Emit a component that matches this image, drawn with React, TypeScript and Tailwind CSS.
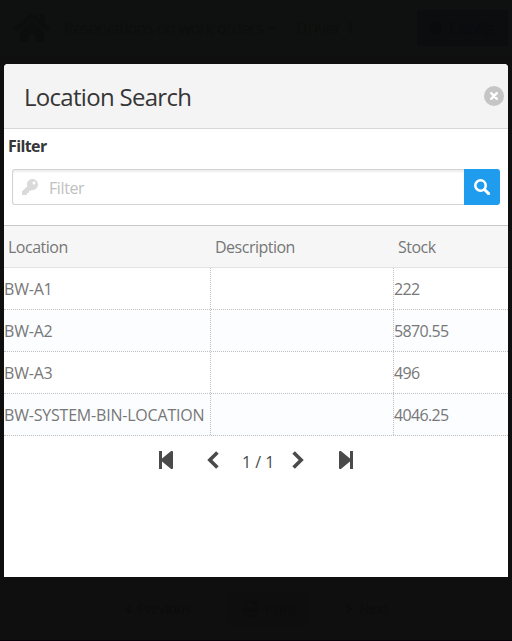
import { FaChevronDown, FaChevronLeft, FaChevronRight, FaCog, FaHome, FaKey, FaPrint } from "react-icons/fa";

const rows = [
  { location: "BW-A1", description: "", stock: "222" },
  { location: "BW-A2", description: "", stock: "5870.55" },
  { location: "BW-A3", description: "", stock: "496" },
  { location: "BW-SYSTEM-BIN-LOCATION", description: "", stock: "4046.25" },
];

function PageHeader() {
  return (
    <header className="flex h-[56px] shrink-0 items-center bg-[#0e110f] text-[16px] whitespace-nowrap text-[#0b0e0c]">
      <FaHome className="ml-[14px] h-[32px] w-[36px] shrink-0" />
      <span className="ml-[14px] w-[203px] shrink-0 tracking-[-0.55px]">Reservations on work orders</span>
      <FaChevronDown className="h-[9px] w-[10px] shrink-0" />
      <span className="ml-[19px] w-[121px] shrink-0 tracking-[-0.1px]">Driver 1</span>
      <div className="flex h-[36px] w-[91px] shrink-0 items-center gap-[7px] rounded-[3px] bg-[#0b0d0f] pl-[11px] tracking-[-0.4px] text-[#0a0b0d]">
        <FaCog className="size-[14px]" />
        <span>Config</span>
      </div>
    </header>
  );
}

function PageFooter() {
  return (
    <footer className="flex h-[64px] items-center border-b border-[#080008] bg-[#0f0f0f] text-[14px] text-[#0c0c0c]">
      <FaChevronLeft className="ml-[124px] size-[10px]" />
      <span className="ml-[4px] w-[89px] tracking-[-0.4px]">Previous</span>
      <div className="flex h-[34px] w-[81px] items-center gap-[6px] rounded bg-[#0e0e0e] pl-[16px] text-[#0c0c0c]">
        <FaPrint className="size-[16px]" />
        <span>Print</span>
      </div>
      <FaChevronRight className="ml-[36px] size-[10px]" />
      <span className="ml-[5px] tracking-[-0.4px]">Next</span>
    </footer>
  );
}

function EndIcon({ flip }: { flip?: boolean }) {
  return (
    <svg viewBox="0 0 14 18" className={flip ? "h-[18px] w-[14px] -scale-x-100" : "h-[18px] w-[14px]"} fill="currentColor">
      <path d="M0 0h3v7.6L11.8.3Q14-.8 14 1.2v15.6q0 2-2.2.9L3 10.4V18H0z" />
    </svg>
  );
}

function Chevron({ flip }: { flip?: boolean }) {
  return (
    <svg viewBox="0 0 12 18" className={flip ? "h-[18px] w-[12px] -scale-x-100" : "h-[18px] w-[12px]"} fill="none" stroke="currentColor" strokeWidth="3.6">
      <path d="M10.4 1.4 2.8 9l7.6 7.6" />
    </svg>
  );
}

export default function App() {
  return (
    <div className="relative flex h-[641px] w-[512px] flex-col overflow-hidden bg-[#0f0f0f] font-['Open_Sans','Noto_Sans',sans-serif]">
      <PageHeader />
      <div className="grow" />
      <PageFooter />
      <section className="absolute top-[64px] left-[4px] flex h-[513px] w-[504px] flex-col overflow-hidden rounded-t-[4px] bg-white">
        <div className="flex h-[65px] shrink-0 items-center justify-between border-b border-[#d8d8d8] bg-[#f4f4f4] pr-[4px] pl-[20px]">
          <h1 className="pt-[2px] text-[24px] leading-[32px] tracking-[-0.7px] text-[#363636]">Location Search</h1>
          <button className="flex size-[20px] items-center justify-center rounded-full bg-[#c5c5c5]">
            <svg viewBox="0 0 10 10" className="size-[10px]" stroke="white" strokeWidth="2.4" strokeLinecap="round">
              <path d="M2.2 2.2l5.6 5.6M7.8 2.2L2.2 7.8" />
            </svg>
          </button>
        </div>
        <div className="h-[96px] shrink-0 pt-[6px]">
          <label className="block pl-[4px] text-[16px] leading-[22px] font-bold tracking-[-0.6px] text-[#363636]">Filter</label>
          <div className="mx-[8px] mt-[12px] flex h-[36px]">
            <div className="flex grow items-center rounded-l-[3px] border border-r-0 border-[#d3d3d3] pl-[9px] shadow-[inset_0_2px_2px_#eeeeee]">
              <FaKey className="size-[16px] text-[#dadada]" />
              <span className="ml-[11px] pt-[1px] text-[16px] leading-[22px] tracking-[-0.4px] text-[#c0c0c0]">Filter</span>
            </div>
            <button className="flex w-[36px] items-center justify-center rounded-r-[3px] bg-[#209cee] text-white">
              <svg viewBox="0 0 16 16" className="size-[16px]" fill="none" stroke="currentColor">
                <circle cx="6.5" cy="6.5" r="5.2" strokeWidth="2.6" />
                <path d="M10.5 10.5l4.1 4.1" strokeWidth="3" strokeLinecap="round" />
              </svg>
            </button>
          </div>
        </div>
        <div className="flex h-[43px] shrink-0 items-center border-t border-b border-t-[#c9c9c9] border-b-[#e2e2e2] bg-[#f6f6f6] pt-[1px] text-[16px] tracking-[-0.5px] text-[#777]">
          <span className="w-[207px] pl-[4px]">Location</span>
          <span className="w-[183px] pl-[4px]">Description</span>
          <span className="pl-[4px]">Stock</span>
        </div>
        <div className="flex flex-col">
          {rows.map((r) => (
            <div key={r.location} className="flex h-[42px] shrink-0 border-b border-dotted border-[#bfbfbf] text-[16px] leading-[43px] text-[#777] even:bg-[#fbfdff]">
              <span className="w-[207px] border-r border-dotted border-[#bfbfbf] tracking-[-0.2px] whitespace-nowrap">{r.location}</span>
              <span className="w-[183px] border-r border-dotted border-[#bfbfbf]">{r.description}</span>
              <span className="tracking-[-0.65px]">{r.stock}</span>
            </div>
          ))}
        </div>
        <nav className="flex h-[48px] shrink-0 items-center pl-[155px] text-[#4a4a4a]">
          <EndIcon />
          <span className="ml-[34px]"><Chevron /></span>
          <span className="ml-[23px] w-[32px] pt-[4px] text-[16px] whitespace-nowrap">1 / 1</span>
          <span className="ml-[18px]"><Chevron flip /></span>
          <span className="ml-[35px]"><EndIcon flip /></span>
        </nav>
      </section>
    </div>
  );
}
